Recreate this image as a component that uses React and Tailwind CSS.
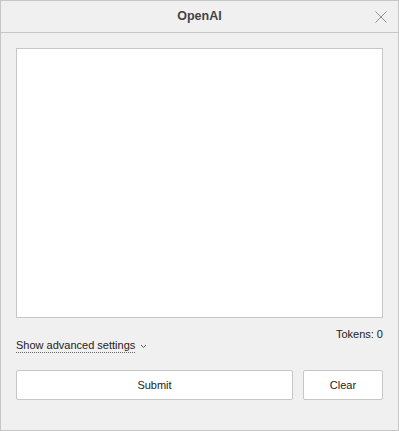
export default function App() {
  return (
    <div className="w-[399px] h-[431px] bg-[#f0f0f0] border border-[#c6c6c6] flex flex-col text-[#222] [font-family:'Liberation_Sans',Arial,sans-serif]">
      <div className="h-[32px] shrink-0 border-b border-[#c6c6c6] flex items-center justify-center relative">
        <span className="text-[12.5px] font-bold text-[#444]">OpenAI</span>
        <button type="button" className="absolute right-[11px] top-[10px] w-[12px] h-[12px]">
          <svg width="12" height="12" viewBox="0 0 12 12">
            <path d="M0.5 0.5L11.5 11.5M11.5 0.5L0.5 11.5" stroke="#8f8f8f" strokeWidth="1" fill="none" />
          </svg>
        </button>
      </div>
      <div className="flex flex-col px-[15px] pt-[15px]">
        <textarea className="h-[270px] w-full bg-white border border-[#c6c6c6] resize-none outline-none" />
        <div className="flex justify-end text-[11px] mt-[9px] leading-[14px]">Tokens: 0</div>
        <div className="flex items-center leading-[14px] text-[11px] mt-[-3px]">
          <span className="border-b border-dotted border-[#666]">Show advanced settings</span>
          <svg width="7" height="5" viewBox="0 0 7 5" className="ml-[5px] mt-[1px]">
            <path d="M1 1L3.5 3.5L6 1" stroke="#555" strokeWidth="1" fill="none" />
          </svg>
        </div>
        <div className="flex gap-[10px] mt-[17px]">
          <button type="button" className="flex-1 h-[30px] bg-white border border-[#c6c6c6] rounded-[2px] text-[11px] text-[#222]">Submit</button>
          <button type="button" className="w-[80px] h-[30px] bg-white border border-[#c6c6c6] rounded-[2px] text-[11px] text-[#222]">Clear</button>
        </div>
      </div>
    </div>
  );
}
